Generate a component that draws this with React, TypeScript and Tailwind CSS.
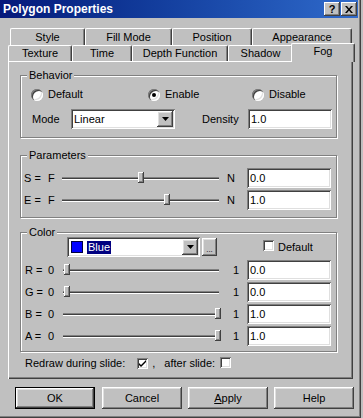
import React from 'react'

// win98 bevels
const raised = 'shadow-[inset_-1px_-1px_#404040,inset_1px_1px_#ffffff,inset_-2px_-2px_#808080,inset_2px_2px_#dfdfdf]'
const raisedThin = 'shadow-[inset_-1px_-1px_#404040,inset_1px_1px_#ffffff,inset_-2px_-2px_#808080]'
const sunken = 'shadow-[inset_1px_1px_#808080,inset_-1px_-1px_#ffffff,inset_2px_2px_#404040,inset_-2px_-2px_#dfdfdf]'

function Group({ title, className, children }: { title: string; className: string; children: React.ReactNode }) {
  return (
    <div className={`relative w-[317px] border border-[#808080] shadow-[1px_1px_0_#ffffff,inset_1px_1px_0_#ffffff] ${className}`}>
      <span className="absolute left-[6px] top-[-7px] bg-[#c0c0c0] px-[2px] leading-[13px]">{title}</span>
      {children}
    </div>
  )
}

function Radio({ checked, label }: { checked?: boolean; label: string }) {
  return (
    <span className="flex items-center gap-[5px]">
      <span className="relative inline-block h-[12px] w-[12px] rounded-full bg-white shadow-[inset_1px_1px_#808080,inset_2px_2px_#404040,inset_-1px_-1px_#ffffff,inset_-2px_-2px_#dfdfdf]">
        {checked && <span className="absolute left-[4px] top-[4px] h-[4px] w-[4px] rounded-full bg-black" />}
      </span>
      {label}
    </span>
  )
}

function Check({ checked }: { checked?: boolean }) {
  return (
    <span className={`inline-flex h-[11px] w-[11px] items-center justify-center bg-white ${sunken}`}>
      {checked && (
        <svg width="7" height="7" viewBox="0 0 7 7">
          <path d="M0 3 L2 5 L7 0 L7 2 L2 7 L0 5 Z" fill="#000" />
        </svg>
      )}
    </span>
  )
}

function Arrow() {
  return (
    <svg width="7" height="4" viewBox="0 0 7 4">
      <polygon points="0,0 7,0 3.5,4" fill="#000" />
    </svg>
  )
}

function DropBtn() {
  return (
    <span className={`ml-auto mr-[2px] flex h-[16px] w-[16px] items-center justify-center bg-[#c0c0c0] ${raised}`}>
      <Arrow />
    </span>
  )
}

function Field({ value }: { value: string }) {
  return <div className={`flex h-[20px] w-[84px] items-center bg-white pl-[3px] ${sunken}`}>{value}</div>
}

function Slider({ pos, width }: { pos: number; width: number }) {
  return (
    <div className="relative flex h-[20px] items-center" style={{ width }}>
      <div className="h-[3px] w-full border-y border-t-[#808080] border-b-white bg-[#404040]" />
      <div className={`absolute top-[4px] h-[11px] w-[6px] bg-[#c0c0c0] ${raisedThin}`} style={{ left: pos }} />
    </div>
  )
}

function Tab({ label, w, h }: { label: string; w: string; h: string }) {
  return (
    <div className={`flex ${w} ${h} items-center justify-center rounded-t-[2px] border-l border-t border-r border-l-white border-t-white border-r-[#404040] shadow-[inset_-1px_0_#808080]`}>
      {label}
    </div>
  )
}

function Button({ children, isDefault }: { children: React.ReactNode; isDefault?: boolean }) {
  return (
    <div className={`flex h-[22px] w-[80px] items-center justify-center bg-[#c0c0c0] ${raised} ${isDefault ? 'border border-black' : ''}`}>
      {children}
    </div>
  )
}

export default function App() {
  const colorRows = [
    { l: 'R =', v: '0.0', pos: 1 },
    { l: 'G =', v: '0.0', pos: 1 },
    { l: 'B =', v: '1.0', pos: 152 },
    { l: 'A =', v: '1.0', pos: 152 },
  ]
  return (
    <div className="h-[418px] w-[363px] overflow-hidden bg-[#c0c0c0] font-['Liberation_Sans',Arial,sans-serif] text-[11px] leading-[13px] text-black">
      <div className="h-[418px] w-[361px] shadow-[inset_-1px_-1px_#404040,inset_-2px_-2px_#808080]">
        {/* title bar */}
        <div className="flex h-[18px] w-[358px] items-center bg-gradient-to-r from-[#06187a] to-[#2f6acb] pl-[3px]">
          <span className="text-[12px] font-bold text-white">Polygon Properties</span>
          <div className="ml-auto mr-[1px] flex gap-[1px]">
            <span className={`flex h-[14px] w-[16px] items-center justify-center bg-[#c0c0c0] text-[11px] font-bold leading-none ${raisedThin}`}>?</span>
            <span className={`flex h-[14px] w-[16px] items-center justify-center bg-[#c0c0c0] ${raisedThin}`}>
              <svg width="8" height="7" viewBox="0 0 8 7">
                <path d="M0 0 L2 0 L4 2.5 L6 0 L8 0 L5 3.5 L8 7 L6 7 L4 4.5 L2 7 L0 7 L3 3.5 Z" fill="#000" />
              </svg>
            </span>
          </div>
        </div>

        {/* tabs */}
        <div className="mt-[10px] flex h-[17px] pl-[10px]">
          <Tab label="Style" w="w-[75px]" h="h-[17px]" />
          <Tab label="Fill Mode" w="w-[87px]" h="h-[17px]" />
          <Tab label="Position" w="w-[80px]" h="h-[17px]" />
          <Tab label="Appearance" w="w-[100px]" h="h-[17px]" />
        </div>
        <div className="flex h-[16px] items-start pl-[8px]">
          <Tab label="Texture" w="w-[64px]" h="h-[16px]" />
          <Tab label="Time" w="w-[60px]" h="h-[16px]" />
          <Tab label="Depth Function" w="w-[96px]" h="h-[16px]" />
          <Tab label="Shadow" w="w-[65px]" h="h-[16px]" />
          <div className="relative z-10 -ml-[2px] -mt-[2px] flex h-[19px] w-[64px] justify-center rounded-t-[2px] border-l border-t border-r border-l-white border-t-white border-r-[#404040] bg-[#c0c0c0] pt-[1px] shadow-[inset_-1px_0_#808080]">
            Fog
          </div>
        </div>

        {/* panel */}
        <div className="ml-[8px] h-[318px] w-[345px] pl-[12px] pt-[14px] shadow-[inset_1px_1px_#ffffff,inset_-1px_-1px_#404040,inset_-2px_-2px_#808080]">
          <Group title="Behavior" className="h-[63px] pl-[10px] pt-[12px]">
            <div className="flex h-[13px] items-center">
              <div className="w-[117px]"><Radio label="Default" /></div>
              <div className="w-[104px]"><Radio label="Enable" checked /></div>
              <Radio label="Disable" />
            </div>
            <div className="mt-[8px] flex h-[20px] items-center">
              <span className="w-[40px] pl-[1px]">Mode</span>
              <div className={`flex h-[20px] w-[104px] items-center bg-white pl-[3px] ${sunken}`}>
                Linear
                <DropBtn />
              </div>
              <span className="ml-[27px] w-[46px]">Density</span>
              <Field value="1.0" />
            </div>
          </Group>

          <Group title="Parameters" className="mt-[17px] h-[63px] pl-[3px] pt-[12px]">
            {[
              { l: 'S =', v: '0.0', pos: 76 },
              { l: 'E =', v: '1.0', pos: 102 },
            ].map((r, i) => (
              <div key={r.l} className={`flex h-[20px] items-center ${i ? 'mt-[2px]' : ''}`}>
                <span className="w-[24px]">{r.l}</span>
                <span className="w-[14px]">F</span>
                <Slider pos={r.pos} width={157} />
                <span className="w-[28px] pl-[8px]">N</span>
                <Field value={r.v} />
              </div>
            ))}
          </Group>

          <Group title="Color" className="mt-[14px] h-[120px] pl-[4px] pt-[4px]">
            <div className="flex h-[20px] items-center">
              <div className={`ml-[42px] flex h-[20px] w-[133px] items-center bg-white pl-[4px] ${sunken}`}>
                <span className="h-[12px] w-[12px] border border-[#000040] bg-[#0000ff]" />
                <span className="ml-[4px] bg-[#000080] px-[1px] text-white">Blue</span>
                <DropBtn />
              </div>
              <span className={`ml-[2px] flex h-[18px] w-[15px] items-end justify-center bg-[#c0c0c0] pb-[2px] text-[8px] leading-none ${raised}`}>...</span>
              <span className="ml-[46px]"><Check /></span>
              <span className="ml-[4px]">Default</span>
            </div>
            {colorRows.map((r, i) => (
              <div key={r.l} className={`flex h-[20px] items-center ${i ? 'mt-[2px]' : 'mt-[3px]'}`}>
                <span className="w-[23px]">{r.l}</span>
                <span className="w-[15px]">0</span>
                <Slider pos={r.pos} width={156} />
                <span className="w-[28px] pl-[14px]">1</span>
                <Field value={r.v} />
              </div>
            ))}
          </Group>

          <div className="mt-[5px] flex h-[13px] items-center pl-[5px]">
            <span>Redraw during slide:</span>
            <span className="ml-[12px]"><Check checked /></span>
            <span className="ml-[4px]">,</span>
            <span className="ml-[9px]">after slide:</span>
            <span className="ml-[5px]"><Check /></span>
          </div>
        </div>

        {/* buttons */}
        <div className="mt-[8px] flex pl-[15px]">
          <Button isDefault>OK</Button>
          <div className="ml-[7px]"><Button>Cancel</Button></div>
          <div className="ml-[6px]"><Button><span className="underline">A</span>pply</Button></div>
          <div className="ml-[6px]"><Button>Help</Button></div>
        </div>
      </div>
    </div>
  )
}
